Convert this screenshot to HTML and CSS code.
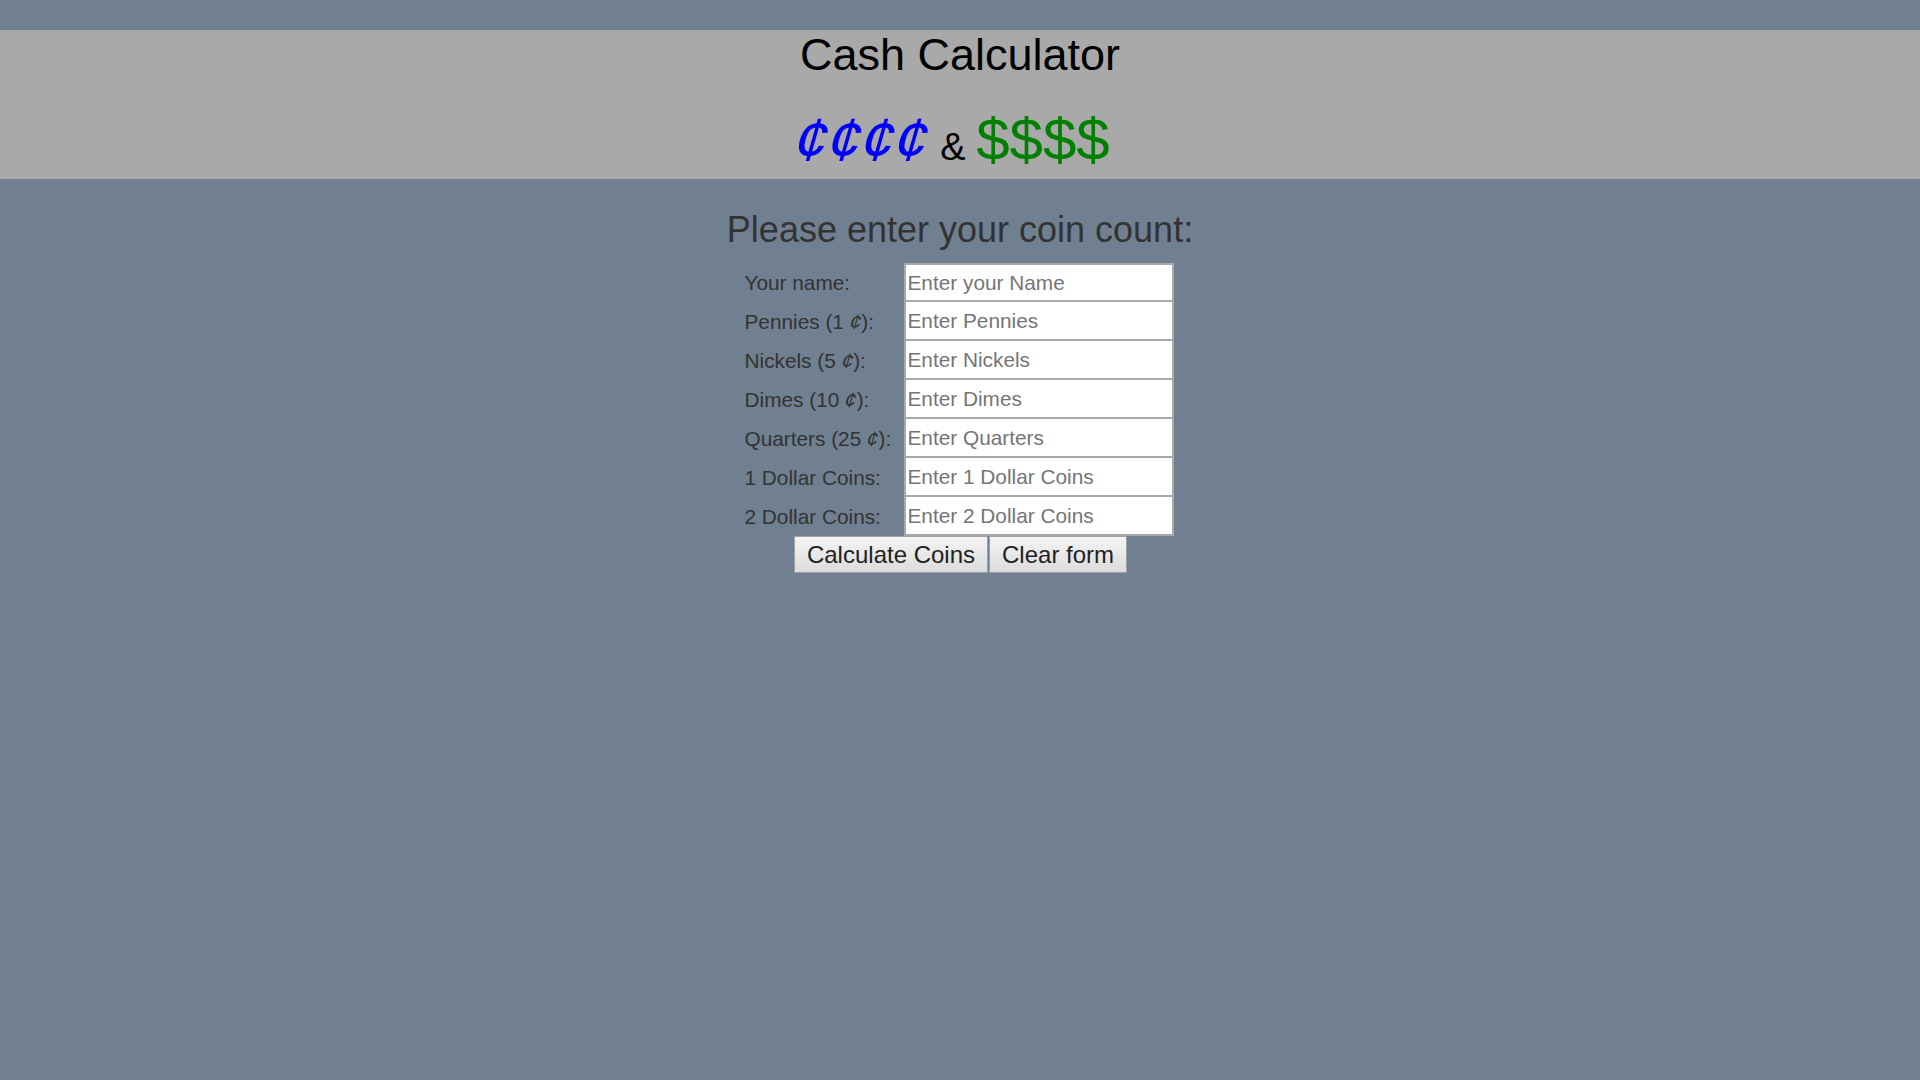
FILE: index.html
```html
<!DOCTYPE html>
<html lang="en">
<head>
<meta charset="utf-8">
<title>Cash Calculator</title>
<link rel="stylesheet" href="styles.css">
</head>
<body>
<header class="banner">
  <h1 class="title">Cash Calculator</h1>
  <div class="subtitle"><span class="cents">¢¢¢¢</span> <span class="amp">&amp;</span> <span class="dollars">$$$$</span></div>
</header>
<main class="content">
  <h2 class="prompt">Please enter your coin count:</h2>
  <form class="coin-form">
    <div class="rows">
      <label class="label" for="name">Your name:</label>
      <input class="field first" id="name" type="text" placeholder="Enter your Name">
      <label class="label" for="pennies">Pennies (1&nbsp;<span class="cent">¢</span>):</label>
      <input class="field" id="pennies" type="text" placeholder="Enter Pennies">
      <label class="label" for="nickels">Nickels (5&nbsp;<span class="cent">¢</span>):</label>
      <input class="field" id="nickels" type="text" placeholder="Enter Nickels">
      <label class="label" for="dimes">Dimes (10&nbsp;<span class="cent">¢</span>):</label>
      <input class="field" id="dimes" type="text" placeholder="Enter Dimes">
      <label class="label" for="quarters">Quarters (25&nbsp;<span class="cent">¢</span>):</label>
      <input class="field" id="quarters" type="text" placeholder="Enter Quarters">
      <label class="label" for="loonies">1 Dollar Coins:</label>
      <input class="field" id="loonies" type="text" placeholder="Enter 1 Dollar Coins">
      <label class="label" for="toonies">2 Dollar Coins:</label>
      <input class="field" id="toonies" type="text" placeholder="Enter 2 Dollar Coins">
    </div>
    <div class="buttons">
      <button class="btn" type="button">Calculate Coins</button>
      <button class="btn" type="reset">Clear form</button>
    </div>
  </form>
</main>
</body>
</html>
```
FILE: styles.css
```css
html, body {
  margin: 0;
  padding: 0;
}
body {
  background: #708090;
  font-family: "Liberation Sans", Arial, sans-serif;
  min-height: 1080px;
  padding-top: 30px;
}
.banner {
  background: #a9a9a9;
  text-align: center;
  padding: 0 0 7px;
}
.title {
  margin: 0;
  font-size: 45px;
  line-height: 50px;
  font-weight: normal;
  color: #000;
}
.subtitle {
  margin-top: 28px;
  padding-right: 14px;
  font-size: 38px;
  line-height: 0;
  color: #000;
}
.cents,
.dollars {
  font-size: 60px;
  line-height: 64px;
}
.cents {
  display: inline-block;
  color: #0000ff;
  transform: skewX(-16deg);
}
.dollars {
  color: #008000;
}
.content {
  display: flex;
  flex-direction: column;
  align-items: center;
}
.prompt {
  margin: 30px 0 13px;
  font-size: 36px;
  font-weight: normal;
  line-height: 41px;
  color: #333;
}
.coin-form {
  display: flex;
  flex-direction: column;
  align-items: center;
}
.rows {
  display: grid;
  grid-template-columns: 157px 270px;
}
.label {
  font-size: 20.8px;
  color: #333;
  display: block;
  line-height: 39px;
  height: 39px;
  margin-left: -2px;
  white-space: nowrap;
}
.cent {
  display: inline-block;
  line-height: 1;
  transform: skewX(-16deg);
}
.field {
  box-sizing: border-box;
  width: 270px;
  height: 39px;
  margin: 0;
  border: 2px solid #a9a9a9;
  border-top-width: 0;
  padding: 0 2px;
  font-family: "Liberation Sans", Arial, sans-serif;
  font-size: 20.8px;
  background: #fff;
  color: #000;
  outline: none;
}
.field.first {
  border-top-width: 2px;
}
.field::placeholder {
  color: #757575;
}
.buttons {
  display: flex;
  gap: 1px;
  margin-left: 1px;
}
.btn {
  font-family: "Liberation Sans", Arial, sans-serif;
  font-size: 24px;
  line-height: 27px;
  padding: 4px 12px;
  border: 1px solid #a0a0a0;
  background: linear-gradient(#f4f4f4, #dcdcdc);
  color: #222;
  border-radius: 0;
  margin: 0;
}
```
